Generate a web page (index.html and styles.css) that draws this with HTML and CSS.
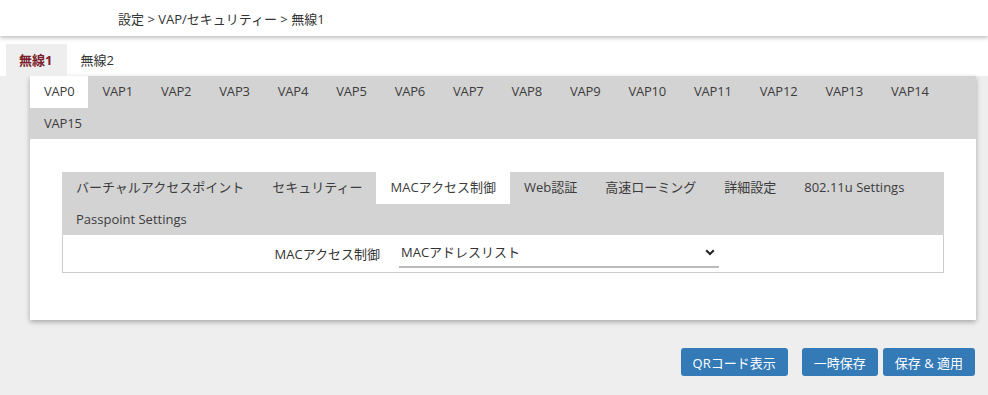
FILE: index.html
```html
<!DOCTYPE html>
<html lang="ja">
<head>
  <meta charset="UTF-8">
  <meta name="viewport" content="width=device-width, initial-scale=1.0">
  <title>VAP/セキュリティー</title>
  <link rel="stylesheet" href="styles.css">
</head>
<body>

  <header class="topbar">
    <div class="crumb">設定 &gt; VAP/セキュリティー &gt; 無線1</div>
  </header>

  <!-- Radio tabs -->
  <nav class="radio-tabs">
    <a class="radio-tab active">無線1</a>
    <a class="radio-tab">無線2</a>
  </nav>

  <main class="content">
    <section class="vap">
      <ul class="vap-tabs">
        <li class="active">VAP0</li>
        <li>VAP1</li>
        <li>VAP2</li>
        <li>VAP3</li>
        <li>VAP4</li>
        <li>VAP5</li>
        <li>VAP6</li>
        <li>VAP7</li>
        <li>VAP8</li>
        <li>VAP9</li>
        <li>VAP10</li>
        <li>VAP11</li>
        <li>VAP12</li>
        <li>VAP13</li>
        <li>VAP14</li>
        <li>VAP15</li>
      </ul>

      <div class="vap-body">
        <ul class="sub-tabs">
          <li>バーチャルアクセスポイント</li>
          <li>セキュリティー</li>
          <li class="active">MACアクセス制御</li>
          <li>Web認証</li>
          <li>高速ローミング</li>
          <li>詳細設定</li>
          <li>802.11u Settings</li>
          <li>Passpoint Settings</li>
        </ul>

        <div class="form-box">
          <div class="form-row">
            <label for="macMode">MACアクセス制御</label>
            <div class="select-wrap">
              <select id="macMode">
                <option>MACアドレスリスト</option>
                <option>無効</option>
              </select>
              <svg class="chevron" width="10" height="7" viewBox="0 0 10 7">
                <path d="M1.2 1.2 L5 5 L8.8 1.2" fill="none" stroke="#222" stroke-width="2"/>
              </svg>
            </div>
          </div>
        </div>
      </div>
    </section>

    <div class="actions">
      <button class="btn btn-qr">QRコード表示</button>
      <button class="btn">一時保存</button>
      <button class="btn">保存 &amp; 適用</button>
    </div>
  </main>

</body>
</html>
```

FILE: styles.css
```css
body {
  margin: 0;
  background-color: #eeeeee;
  font-family: "Open Sans", "Noto Sans CJK JP", sans-serif;
  font-size: 13px;
  color: #333;
}
ul {
  margin: 0;
  padding: 0;
  list-style: none;
}
.topbar {
  position: relative;
  z-index: 1;
  height: 36px;
  display: flex;
  align-items: center;
  padding-left: 118px;
  background-color: white;
  box-shadow: 0 2px 4px rgba(0, 0, 0, 0.25);
}
.radio-tabs {
  display: flex;
  padding: 8px 0 0 6px;
  background-color: white;
}
.radio-tab {
  padding: 0 15px 0 13px;
  line-height: 32px;
  color: #333;
  cursor: pointer;
}
.radio-tab.active {
  background-color: #eeeeee;
  color: #7b1f2e;
  font-weight: bold;
}
.content {
  padding: 0 12px 0 30px;
}
.vap {
  background-color: white;
  box-shadow: 0 2px 5px rgba(0, 0, 0, 0.3);
}
.vap-tabs {
  display: flex;
  flex-wrap: wrap;
  background-color: #d3d3d3;
}
.vap-tabs li {
  padding: 0 14px;
  line-height: 31.5px;
  letter-spacing: -0.2px;
  color: #3c3c3c;
  cursor: pointer;
}
.vap-tabs li.active,
.sub-tabs li.active {
  background-color: white;
}
.vap-body {
  padding: 33px 32px 47px;
}
.sub-tabs {
  display: flex;
  flex-wrap: wrap;
  background-color: #d3d3d3;
}
.sub-tabs li {
  padding: 0 14px;
  line-height: 31.5px;
  color: #3c3c3c;
  cursor: pointer;
}
.form-box {
  padding: 4px 0;
  border: 1px solid #cccccc;
  border-top: none;
  background-color: white;
}
.form-row {
  display: flex;
  align-items: center;
}
.form-row label {
  width: 317px;
  margin-right: 19px;
  text-align: right;
  color: #333;
}
.select-wrap {
  position: relative;
  width: 320px;
}
.select-wrap select {
  width: 100%;
  height: 29px;
  padding: 0 2px 2px;
  border: none;
  border-bottom: 2px solid #bbbbbb;
  background: transparent;
  appearance: none;
  font-family: inherit;
  font-size: 13px;
  color: #333;
  outline: none;
}
.chevron {
  position: absolute;
  right: 4px;
  top: 10px;
  pointer-events: none;
}
.actions {
  display: flex;
  justify-content: flex-end;
  padding: 28px 1px 0 0;
}
.btn {
  height: 28px;
  margin-left: 5px;
  padding: 0 12px;
  border: none;
  border-radius: 3px;
  background-color: #337ab7;
  color: white;
  font-family: inherit;
  font-size: 13px;
  cursor: pointer;
}
.btn-qr {
  margin-right: 9px;
}
.btn:hover {
  background-color: #286090;
}
```
